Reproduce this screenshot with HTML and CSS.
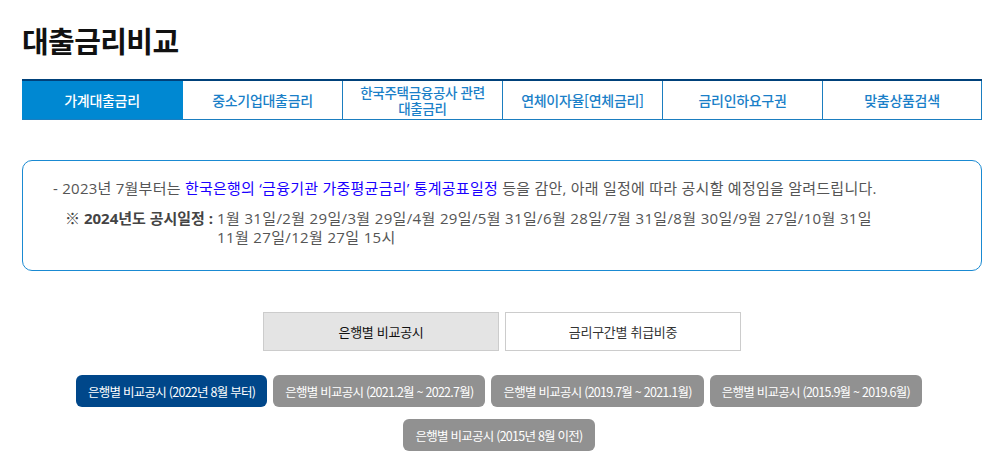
FILE: index.html
```html
<!DOCTYPE html>
<html lang="ko">
<head>
<meta charset="utf-8">
<title>대출금리비교</title>
<link rel="stylesheet" href="styles.css">
</head>
<body>
<div class="page">
  <h1 class="title">대출금리비교</h1>
  <ul class="tabs">
    <li class="tab active">가계대출금리</li>
    <li class="tab">중소기업대출금리</li>
    <li class="tab two">한국주택금융공사 관련<br>대출금리</li>
    <li class="tab">연체이자율[연체금리]</li>
    <li class="tab">금리인하요구권</li>
    <li class="tab">맞춤상품검색</li>
  </ul>
  <div class="notice">
    <p class="line1">- 2023년 7월부터는 <span class="blue">한국은행의 ‘금융기관 가중평균금리’ 통계공표일정</span> 등을 감안, 아래 일정에 따라 공시할 예정임을 알려드립니다.</p>
    <div class="sched">
      <span class="label">※ 2024년도 공시일정 :</span>
      <span class="dates">1월 31일/2월 29일/3월 29일/4월 29일/5월 31일/6월 28일/7월 31일/8월 30일/9월 27일/10월 31일<br>11월 27일/12월 27일 15시</span>
    </div>
  </div>
  <div class="seg">
    <div class="segbtn on">은행별 비교공시</div>
    <div class="segbtn">금리구간별 취급비중</div>
  </div>
  <div class="pills">
    <div class="pill cur">은행별 비교공시 (2022년 8월 부터)</div>
    <div class="pill">은행별 비교공시 (2021.2월 ~ 2022.7월)</div>
    <div class="pill">은행별 비교공시 (2019.7월 ~ 2021.1월)</div>
    <div class="pill">은행별 비교공시 (2015.9월 ~ 2019.6월)</div>
    <div class="pill">은행별 비교공시 (2015년 8월 이전)</div>
  </div>
</div>
</body>
</html>
```
FILE: styles.css
```css
* { box-sizing: border-box; }
html, body { margin: 0; padding: 0; background: #fff; }
body {
  font-family: "Noto Sans CJK KR", "Noto Sans", sans-serif;
  color: #333;
}
.page {
  width: 960px;
  margin-left: 22px;
}
.title {
  margin: 0;
  padding-top: 20px;
  height: 79px;
  font-size: 29px;
  line-height: 40px;
  font-weight: 700;
  color: #111;
  letter-spacing: -0.6px;
}
.tabs {
  list-style: none;
  margin: 0;
  padding: 0;
  display: grid;
  grid-template-columns: repeat(6, 1fr);
  height: 41px;
  border-top: 2px solid #00417a;
  border-bottom: 1px solid #1b7ec0;
}
.tab {
  display: flex;
  align-items: center;
  justify-content: center;
  text-align: center;
  font-size: 14px;
  line-height: 17px;
  color: #1a7fc8;
  border-left: 1px solid #1b7ec0;
  font-weight: 500;
  letter-spacing: -0.3px;
}
.tab.two { font-size: 13.5px; line-height: 16px; }
.tab:first-child { border-left: 0; }
.tab:last-child { border-right: 1px solid #1b7ec0; }
.tab.active {
  background: #0088d2;
  color: #fff;
}
.tab.active + .tab { border-left-color: #0088d2; }
.notice {
  margin-top: 40px;
  height: 111px;
  border: 1px solid #1a8ad2;
  border-radius: 10px;
  padding: 16px 20px 0 30px;
  font-family: "Open Sans", "Noto Sans CJK KR", sans-serif;
  font-size: 15px;
  letter-spacing: 0.25px;
  color: #555;
}
.line1 {
  margin: 0;
  line-height: 22px;
}
.blue { color: #1a00ff; }
.sched {
  display: flex;
  margin-top: 10px;
  padding-left: 12px;
  line-height: 19px;
}
.label {
  font-weight: 700;
  color: #444;
  letter-spacing: 0;
  margin-right: 4px;
  white-space: nowrap;
}
.dates { letter-spacing: 0.35px; }
.seg {
  display: flex;
  justify-content: center;
  gap: 6px;
  margin-top: 41px;
}
.segbtn {
  width: 236px;
  height: 39px;
  border: 1px solid #cccccc;
  display: flex;
  align-items: center;
  justify-content: center;
  font-size: 13px;
  color: #333;
  letter-spacing: -0.3px;
}
.segbtn.on { background: #e4e4e4; color: #111; }
.pills {
  display: flex;
  flex-wrap: wrap;
  justify-content: center;
  gap: 12px 6px;
  margin-top: 24px;
  padding-right: 6px;
}
.pill {
  height: 32px;
  padding: 0 12px;
  border-radius: 6px;
  background: #919191;
  color: #fff;
  font-size: 12.5px;
  letter-spacing: -0.75px;
  display: flex;
  align-items: center;
  white-space: nowrap;
}
.pill.cur { background: #00478a; }
```
